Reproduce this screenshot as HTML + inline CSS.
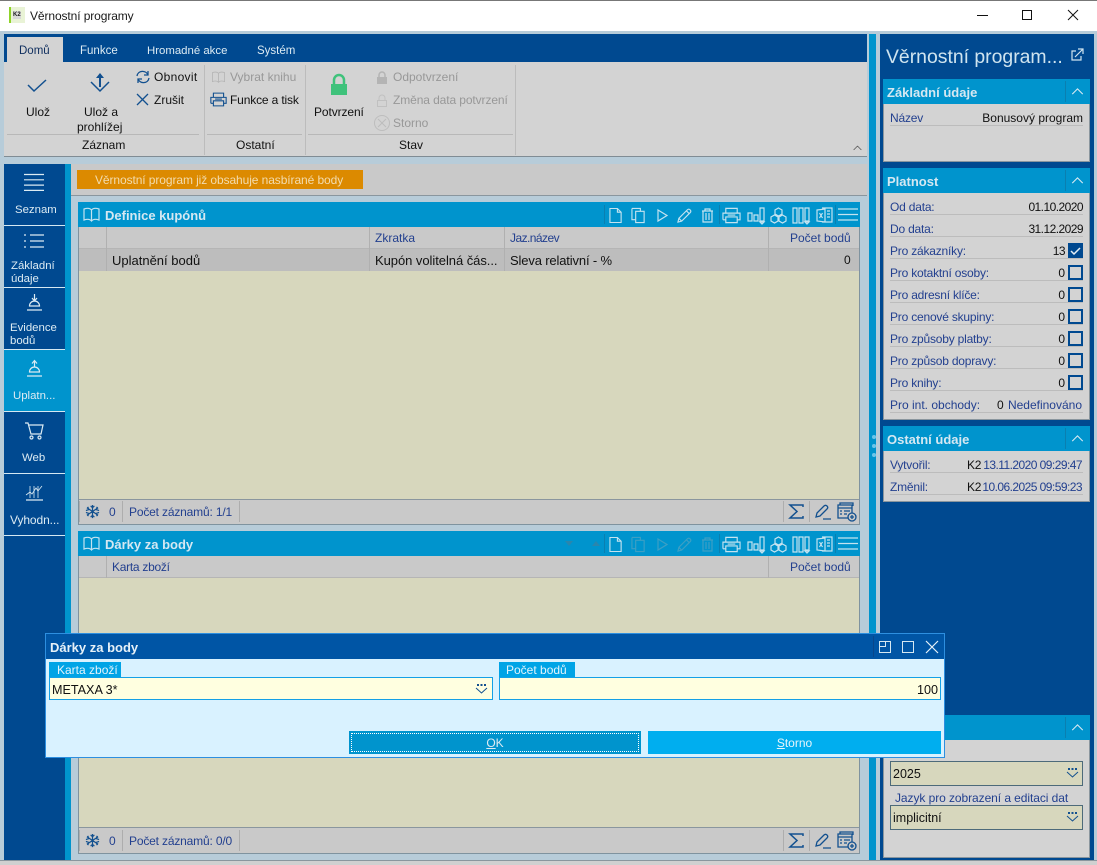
<!DOCTYPE html>
<html lang="cs"><head><meta charset="utf-8"><title>Věrnostní programy</title>
<style>
html,body{margin:0;padding:0;width:1097px;height:865px;overflow:hidden;background:#b7ccd9}
body{position:relative;font:12px/14px "Liberation Sans",sans-serif;color:#111}
.b{position:absolute;display:block}
.t{position:absolute;white-space:nowrap;line-height:14px}
.r{text-align:right}
.c{text-align:center}
.w{color:#dcebf3}
.nt{font-size:11.400px}
.n{color:#23408f}
.l{letter-spacing:-.2px}
.d{letter-spacing:-.55px}
.g{color:#989898}
.h{font-weight:bold;color:#d5e8f2;font-size:13px}
svg{position:absolute;overflow:visible;fill:none}
.tb{color:#c4e3f0;stroke:currentColor;stroke-width:1.2}
.dim{color:#3d9fc4}
.nv{stroke:#12508f;stroke-width:1.3}
.lw{stroke:#dcebf3;stroke-width:1.2}
.ln{position:absolute;left:890px;width:193px;height:1px;background:#bcbcbc}
.cb{position:absolute;left:1068px;width:11px;height:11px;border:2px solid #004990;background:#d3d3d3}
.sp{position:absolute;width:1px;background:#adadad;height:21px}
.sh{position:absolute;width:1px;background:#0a7fb0;height:19px}
</style></head><body>
<svg width="0" height="0" style="position:absolute"><defs>
<symbol id="doc" viewBox="0 0 15 17" overflow="visible"><path d="M1 1h8l4 4v11H1zM9 1v4h4"/></symbol>
<symbol id="copy" viewBox="0 0 16 17" overflow="visible"><path d="M1 1h9v3M1 1v12h4M5 4h9v12H5z"/></symbol>
<symbol id="play" viewBox="0 0 11 13" overflow="visible"><path d="M1 1l9 5.500L1 12z"/></symbol>
<symbol id="pen" viewBox="0 0 16 16" overflow="visible"><path d="M1 15l1-4L11 2c1-1 2-1 3 0s1 2 0 3l-9 9zM2 11l3 3M10 3l3 3"/></symbol>
<symbol id="trash" viewBox="0 0 13 15" overflow="visible"><path d="M1 3h11M4 3V1h5v2M2 3v11h9V3M5 5v7M8 5v7"/></symbol>
<symbol id="print" viewBox="0 0 20 17" overflow="visible"><path d="M4 6V1h12v5M1 13V6h18v7h-3M1 13h3M4 10h12v6H4zM6 8h8"/></symbol>
<symbol id="bars" viewBox="0 0 18 17" overflow="visible"><path d="M1 6h4v8H1zM7 8h4v6H7zM13 1h4v13h-4zM13 15h4l-2 2z"/></symbol>
<symbol id="cubes" viewBox="0 0 17 17" overflow="visible"><path d="M8.500 1l3.500 2v4l-3.500 2L5 7V3zM4.500 8L8 10v4l-3.500 2L1 14v-4zM12.500 8l3.500 2v4l-3.500 2L9 14v-4z"/></symbol>
<symbol id="cols" viewBox="0 0 18 17" overflow="visible"><path d="M1 1h4v15H1zM7 1h4v15H7zM13 1h4v13h-4zM13 15h4l-2 2z"/></symbol>
<symbol id="xls" viewBox="0 0 17 17" overflow="visible"><path d="M6 1h10v14H6M1 3l8-1v13l-8-1zM3.500 6l3 5M6.500 6l-3 5M11 4h3M11 7h3M11 10h3"/></symbol>
<symbol id="book" viewBox="0 0 17 16" overflow="visible"><path d="M1 2c3-1 6-1 7.500 1C10 1 13 1 16 2v11c-3-1-6-1-7.500 1C7 12 4 12 1 13zM8.500 3v11"/></symbol>
<symbol id="snow" viewBox="0 0 16 16" overflow="visible"><path d="M8 1v14M2 4l12 8M14 4L2 12M6 2l2 2 2-2M6 14l2-2 2 2M1 7l3-1-1-3M15 7l-3-1 1-3M1 9l3 1-1 3M15 9l-3 1 1 3"/></symbol>
<symbol id="tadd" viewBox="0 0 20 20" overflow="visible"><path d="M3 3V1h13v3M1 3h14v13H1zM1 6h14M3 9h2M7 9h6M3 12h2M7 12h3"/><circle cx="15" cy="15" r="4" fill="#c8c8c8"/><path d="M15 13v4M13 15h4"/></symbol>
<symbol id="sig" viewBox="0 0 15 15" overflow="visible"><path d="M14 3V1H1l7 6.500L1 14h13v-2" stroke-width="1.500"/></symbol>
<symbol id="penl" viewBox="0 0 16 16" overflow="visible"><path d="M1 13l1-4L9 2c1-1 2-1 3 0s1 2 0 3l-7 7zM8 15h8"/></symbol>
<symbol id="chev" viewBox="0 0 14 8" overflow="visible"><path d="M1 7l6-6 6 6"/></symbol>
<symbol id="drop" viewBox="0 0 13 10" overflow="visible"><path d="M1 4l5.500 5L12 4"/><path d="M2 0h2v2H2zM5.500 0h2v2h-2zM9 0h2v2H9z" fill="currentColor" stroke="none"/></symbol>
<symbol id="menu" viewBox="0 0 20 13" overflow="visible"><path d="M0 1h20M0 6.500h20M0 12h20"/></symbol>
</defs></svg>

<!-- title bar -->
<div class="b" style="left:0;top:0;width:1097px;height:31px;background:#fff;border-top:1px solid #777;box-sizing:border-box"></div>
<div class="b" style="left:9px;top:7px;width:16px;height:16px;background:#e9f3d6"></div>
<div class="b" style="left:9px;top:7px;width:2px;height:16px;background:#8fd32a"></div>
<div class="t" style="left:13px;top:11px;font:bold 6px/8px 'Liberation Sans',sans-serif;color:#222;background:#d8d8d8">K2</div>
<div class="t" style="left:30px;top:9px;color:#1a1a1a;letter-spacing:-.1px">Věrnostní programy</div>
<div class="b" style="left:977px;top:15px;width:11px;height:1px;background:#111"></div>
<div class="b" style="left:1022px;top:10px;width:8px;height:8px;border:1px solid #111"></div>
<svg style="left:1068px;top:10px" width="10" height="10" stroke="#111"><path d="M0 0l10 10M10 0L0 10"/></svg>

<!-- ribbon -->
<div class="b" style="left:4px;top:34px;width:863px;height:28px;background:#004990"></div>
<div class="b" style="left:4px;top:62px;width:863px;height:95px;background:#d3d3d3;border-bottom:1px solid #808c94;box-sizing:border-box"></div>
<div class="b" style="left:7px;top:37px;width:56px;height:25px;background:#d3d3d3"></div>
<div class="t" style="left:19px;top:44px;font-size:11.500px;color:#0f2e5e">Domů</div>
<div class="t w" style="left:80px;top:44px;font-size:11.500px">Funkce</div>
<div class="t w" style="left:147px;top:44px;font-size:11.400px">Hromadné akce</div>
<div class="t w" style="left:257px;top:44px;font-size:11.500px">Systém</div>

<svg class="nv" style="left:27px;top:79px" width="20" height="14"><path d="M1 6l6 6L19 1" stroke-width="1.500"/></svg>
<div class="t" style="left:26px;top:105px">Ulož</div>
<svg class="nv" style="left:90px;top:72px" width="20" height="21"><path d="M1 10l9 9 9-9" stroke-width="1.500"/><path d="M10 15V2" stroke-width="2"/><path d="M6 6l4-5 4 5z" fill="#12508f" stroke="none"/></svg>
<div class="t" style="left:84px;top:105px">Ulož a</div>
<div class="t" style="left:77px;top:120px">prohlížej</div>
<svg class="nv" style="left:136px;top:70px" width="14" height="14"><path d="M1 6c1-6 9-6 11-1M13 8c-1 6-9 6-11 1M12 1v4H8M2 13V9h4"/></svg>
<div class="t" style="left:154px;top:70px;letter-spacing:.3px">Obnovit</div>
<svg class="nv" style="left:137px;top:94px" width="11" height="11"><path d="M0 0l11 11M11 0L0 11"/></svg>
<div class="t" style="left:154px;top:93px">Zrušit</div>
<div class="b" style="left:7px;top:134px;width:192px;height:1px;background:#b8b8b8"></div>
<div class="t" style="left:82px;top:138px">Záznam</div>
<div class="b" style="left:204px;top:65px;width:1px;height:90px;background:#bcbcbc"></div>

<svg style="left:211px;top:71px;color:#b4b4b4;stroke:currentColor" width="15" height="13" viewBox="0 0 17 16"><use href="#book"/></svg>
<div class="t g" style="left:230px;top:70px">Vybrat knihu</div>
<svg class="nv" style="left:210px;top:92px" width="17" height="15" viewBox="0 0 20 17"><use href="#print"/></svg>
<div class="t" style="left:230px;top:93px;letter-spacing:-.15px">Funkce a tisk</div>
<div class="b" style="left:207px;top:134px;width:95px;height:1px;background:#b8b8b8"></div>
<div class="t" style="left:236px;top:138px">Ostatní</div>
<div class="b" style="left:305px;top:65px;width:1px;height:90px;background:#bcbcbc"></div>

<svg style="left:330px;top:74px" width="18" height="22"><path d="M4 10V6a5 5 0 0 1 10 0v4" stroke="#3fc27b" stroke-width="2.500"/><rect x="1" y="10" width="16" height="11" fill="#3fc27b"/></svg>
<div class="t" style="left:314px;top:105px;letter-spacing:-.1px">Potvrzení</div>
<svg style="left:376px;top:71px" width="12" height="13"><path d="M3 6V4a3 3 0 0 1 6 0v2" stroke="#b4b4b4" stroke-width="1.500"/><rect x="1" y="6" width="10" height="7" fill="#b4b4b4"/></svg>
<div class="t g" style="left:393px;top:70px">Odpotvrzení</div>
<svg style="left:376px;top:94px" width="12" height="13"><path d="M3 6V4a3 3 0 0 1 6 0v2M1.500 6.500h9v6h-9z" stroke="#c0c0c0"/></svg>
<div class="t g" style="left:393px;top:93px;letter-spacing:-.1px">Změna data potvrzení</div>
<svg style="left:374px;top:115px" width="16" height="16" stroke="#bdbdbd"><circle cx="8" cy="8" r="7.500"/><path d="M4 4l8 8M12 4l-8 8"/></svg>
<div class="t g" style="left:393px;top:116px">Storno</div>
<div class="b" style="left:308px;top:134px;width:205px;height:1px;background:#b8b8b8"></div>
<div class="t" style="left:399px;top:138px">Stav</div>
<div class="b" style="left:515px;top:65px;width:1px;height:90px;background:#bcbcbc"></div>
<svg style="left:853px;top:145px;stroke:#333" width="9" height="6" viewBox="0 0 14 8"><use href="#chev"/></svg>

<!-- left nav -->
<div class="b" style="left:4px;top:164px;width:61px;height:696px;background:#004990"></div>
<div class="b" style="left:65px;top:164px;width:6px;height:696px;background:#0094cd"></div>
<div class="b" style="left:4px;top:350px;width:61px;height:61px;background:#0094cd"></div>
<div class="b" style="left:4px;top:225px;width:61px;height:1px;background:#d5e8f2"></div>
<div class="b" style="left:4px;top:287px;width:61px;height:1px;background:#d5e8f2"></div>
<div class="b" style="left:4px;top:349px;width:61px;height:1px;background:#d5e8f2"></div>
<div class="b" style="left:4px;top:411px;width:61px;height:1px;background:#d5e8f2"></div>
<div class="b" style="left:4px;top:473px;width:61px;height:1px;background:#d5e8f2"></div>
<div class="b" style="left:4px;top:535px;width:61px;height:1px;background:#d5e8f2"></div>

<svg class="lw" style="left:24px;top:174px" width="20" height="17"><path d="M0 .5h20M0 5.800h20M0 11.100h20M0 16.400h20"/></svg>
<div class="t w nt" style="left:15px;top:203px">Seznam</div>
<svg class="lw" style="left:24px;top:234px" width="20" height="14"><path d="M6 1h14M6 7h14M6 13h14M0 1h2M0 7h2M0 13h2"/></svg>
<div class="t w nt" style="left:11px;top:259px">Základní</div>
<div class="t w nt" style="left:11px;top:272px">údaje</div>
<svg class="lw" style="left:27px;top:294px" width="15" height="17"><path d="M7.500 0v6M5 4l2.500 3L10 4M2.500 12a5 5 0 0 1 10 0zM0 16h15"/></svg>
<div class="t w nt" style="left:10px;top:321px">Evidence</div>
<div class="t w nt" style="left:10px;top:334px">bodů</div>
<svg class="lw" style="left:27px;top:360px" width="15" height="17"><path d="M7.500 7V1M5 3.500L7.500 .5 10 3.500M2.500 12a5 5 0 0 1 10 0zM0 16h15"/></svg>
<div class="t w nt" style="left:13px;top:389px">Uplatn...</div>
<svg class="lw" style="left:25px;top:422px" width="19" height="18"><path d="M0 1h3l3 11h10l2-9H4"/><circle cx="6.500" cy="15.500" r="1.500"/><circle cx="14.500" cy="15.500" r="1.500"/></svg>
<div class="t w nt" style="left:22px;top:451px">Web</div>
<svg class="lw" style="left:26px;top:484px" width="17" height="17"><path d="M0 11l4-3 2 2 4-6 2 3 4-5M4 2v12M8 2v12M12 2v12" stroke-width=".8"/><path d="M0 16h17"/></svg>
<div class="t w" style="left:10px;top:513px;letter-spacing:-.1px">Vyhodn...</div>

<!-- content area -->
<div class="b" style="left:71px;top:164px;width:796px;height:32px;background:#c9c9c9;border-bottom:1px solid #8a969e;box-sizing:border-box"></div>
<div class="b" style="left:77px;top:170px;width:286px;height:19px;background:#dc8a00"></div>
<div class="t" style="left:95px;top:173px;color:#f2dcae;letter-spacing:-.09px">Věrnostní program již obsahuje nasbírané body</div>

<!-- grid 1 -->
<div class="b" style="left:78px;top:202px;width:782px;height:323px;background:#d7d7bd;border:1px solid #7f939f;border-top:0;box-sizing:border-box"></div>
<div class="b" style="left:78px;top:202px;width:782px;height:25px;background:#0094cd"></div>
<svg class="tb" style="left:83px;top:207px" width="17" height="16"><use href="#book"/></svg>
<div class="t h" style="left:105px;top:209px">Definice kupónů</div>
<div class="b" style="left:79px;top:227px;width:780px;height:22px;background:#c9c9c9;border-bottom:1px solid #b5b5b5;box-sizing:border-box"></div>
<div class="b" style="left:79px;top:249px;width:780px;height:22px;background:#bdbdbd"></div>
<div class="b" style="left:106px;top:227px;width:1px;height:44px;background:#b0b0b0"></div>
<div class="b" style="left:369px;top:227px;width:1px;height:44px;background:#b0b0b0"></div>
<div class="b" style="left:504px;top:227px;width:1px;height:44px;background:#b0b0b0"></div>
<div class="b" style="left:768px;top:227px;width:1px;height:44px;background:#b0b0b0"></div>
<div class="t n" style="left:375px;top:231px">Zkratka</div>
<div class="t n" style="left:510px;top:231px;letter-spacing:-.55px">Jaz.název</div>
<div class="t n" style="left:790px;top:231px">Počet bodů</div>
<div class="t" style="left:112px;top:254px;font-size:13px">Uplatnění bodů</div>
<div class="t" style="left:375px;top:254px;font-size:13px;letter-spacing:-.05px">Kupón volitelná čás...</div>
<div class="t" style="left:510px;top:254px;font-size:13px;letter-spacing:-.15px">Sleva relativní - %</div>
<div class="t" style="left:844px;top:253px">0</div>

<div class="sh" style="left:604px;top:205px"></div>
<svg class="tb" style="left:609px;top:207px" width="14" height="17" viewBox="0 0 15 17"><use href="#doc"/></svg>
<svg class="tb" style="left:631px;top:207px" width="15" height="17" viewBox="0 0 16 17"><use href="#copy"/></svg>
<svg class="tb" style="left:657px;top:209px" width="11" height="13" viewBox="0 0 11 13"><use href="#play"/></svg>
<svg class="tb" style="left:677px;top:208px" width="15" height="15" viewBox="0 0 16 16"><use href="#pen"/></svg>
<svg class="tb" style="left:701px;top:208px" width="13" height="15" viewBox="0 0 13 15"><use href="#trash"/></svg>
<div class="sh" style="left:719px;top:205px"></div>
<svg class="tb" style="left:722px;top:207px" width="19" height="17" viewBox="0 0 20 17"><use href="#print"/></svg>
<svg class="tb" style="left:747px;top:207px" width="18" height="17" viewBox="0 0 18 17"><use href="#bars"/></svg>
<svg class="tb" style="left:770px;top:207px" width="17" height="17" viewBox="0 0 17 17"><use href="#cubes"/></svg>
<svg class="tb" style="left:792px;top:207px" width="18" height="17" viewBox="0 0 18 17"><use href="#cols"/></svg>
<svg class="tb" style="left:816px;top:207px" width="17" height="17" viewBox="0 0 17 17"><use href="#xls"/></svg>
<div class="sh" style="left:835px;top:205px"></div>
<svg class="tb" style="left:838px;top:208px" width="20" height="13" viewBox="0 0 20 13"><use href="#menu"/></svg>

<div class="b" style="left:79px;top:499px;width:780px;height:25px;background:#c9c9c9;border-top:1px solid #8a969e;box-sizing:border-box"></div>
<div class="sp" style="left:79px;top:501px"></div>
<svg class="nv" style="left:85px;top:504px" width="15" height="15" viewBox="0 0 16 16"><use href="#snow"/></svg>
<div class="t n" style="left:109px;top:505px">0</div>
<div class="sp" style="left:122px;top:501px"></div>
<div class="t n" style="left:129px;top:505px;letter-spacing:-.17px">Počet záznamů: 1/1</div>
<div class="sp" style="left:239px;top:501px"></div>
<div class="sp" style="left:783px;top:501px"></div>
<svg class="nv" style="left:789px;top:504px" width="15" height="15" viewBox="0 0 15 15"><use href="#sig"/></svg>
<div class="sp" style="left:809px;top:501px"></div>
<svg class="nv" style="left:815px;top:504px" width="16" height="16" viewBox="0 0 16 16"><use href="#penl"/></svg>
<svg class="nv" style="left:837px;top:502px" width="20" height="20" viewBox="0 0 20 20"><use href="#tadd"/></svg>

<!-- grid 2 -->
<div class="b" style="left:78px;top:531px;width:782px;height:323px;background:#d7d7bd;border:1px solid #7f939f;border-top:0;box-sizing:border-box"></div>
<div class="b" style="left:78px;top:531px;width:782px;height:25px;background:#0094cd"></div>
<svg class="tb" style="left:83px;top:536px" width="17" height="16"><use href="#book"/></svg>
<div class="t h" style="left:105px;top:538px">Dárky za body</div>
<div class="b" style="left:79px;top:556px;width:780px;height:22px;background:#c9c9c9;border-bottom:1px solid #b5b5b5;box-sizing:border-box"></div>
<div class="b" style="left:106px;top:556px;width:1px;height:22px;background:#b0b0b0"></div>
<div class="b" style="left:768px;top:556px;width:1px;height:22px;background:#b0b0b0"></div>
<div class="t n" style="left:112px;top:560px;letter-spacing:-.27px">Karta zboží</div>
<div class="t n" style="left:790px;top:560px">Počet bodů</div>

<svg style="left:565px;top:541px" width="36" height="6"><path d="M0 0h8L4 5zM27 5h8l-4-5z" fill="#2a86ad"/></svg>
<div class="sh" style="left:604px;top:534px"></div>
<svg class="tb" style="left:609px;top:536px" width="14" height="17" viewBox="0 0 15 17"><use href="#doc"/></svg>
<svg class="tb dim" style="left:631px;top:536px" width="15" height="17" viewBox="0 0 16 17"><use href="#copy"/></svg>
<svg class="tb dim" style="left:657px;top:538px" width="11" height="13" viewBox="0 0 11 13"><use href="#play"/></svg>
<svg class="tb dim" style="left:677px;top:537px" width="15" height="15" viewBox="0 0 16 16"><use href="#pen"/></svg>
<svg class="tb dim" style="left:701px;top:537px" width="13" height="15" viewBox="0 0 13 15"><use href="#trash"/></svg>
<div class="sh" style="left:719px;top:534px"></div>
<svg class="tb" style="left:722px;top:536px" width="19" height="17" viewBox="0 0 20 17"><use href="#print"/></svg>
<svg class="tb" style="left:747px;top:536px" width="18" height="17" viewBox="0 0 18 17"><use href="#bars"/></svg>
<svg class="tb" style="left:770px;top:536px" width="17" height="17" viewBox="0 0 17 17"><use href="#cubes"/></svg>
<svg class="tb" style="left:792px;top:536px" width="18" height="17" viewBox="0 0 18 17"><use href="#cols"/></svg>
<svg class="tb" style="left:816px;top:536px" width="17" height="17" viewBox="0 0 17 17"><use href="#xls"/></svg>
<div class="sh" style="left:835px;top:534px"></div>
<svg class="tb" style="left:838px;top:537px" width="20" height="13" viewBox="0 0 20 13"><use href="#menu"/></svg>

<div class="b" style="left:79px;top:827px;width:780px;height:26px;background:#c9c9c9;border-top:1px solid #8a969e;box-sizing:border-box"></div>
<div class="sp" style="left:79px;top:830px"></div>
<svg class="nv" style="left:85px;top:833px" width="15" height="15" viewBox="0 0 16 16"><use href="#snow"/></svg>
<div class="t n" style="left:109px;top:834px">0</div>
<div class="sp" style="left:122px;top:830px"></div>
<div class="t n" style="left:129px;top:834px;letter-spacing:-.17px">Počet záznamů: 0/0</div>
<div class="sp" style="left:239px;top:830px"></div>
<div class="sp" style="left:783px;top:830px"></div>
<svg class="nv" style="left:789px;top:833px" width="15" height="15" viewBox="0 0 15 15"><use href="#sig"/></svg>
<div class="sp" style="left:809px;top:830px"></div>
<svg class="nv" style="left:815px;top:833px" width="16" height="16" viewBox="0 0 16 16"><use href="#penl"/></svg>
<svg class="nv" style="left:837px;top:831px" width="20" height="20" viewBox="0 0 20 20"><use href="#tadd"/></svg>

<div class="b" style="left:0;top:860px;width:1097px;height:5px;background:#d0d0d0;border-top:1px solid #8a969e;box-sizing:border-box"></div>

<!-- right strip -->
<div class="b" style="left:869px;top:34px;width:7px;height:826px;background:#0094cd"></div>
<div class="b" style="left:872px;top:435px;width:4px;height:4px;border-radius:2px;background:#6cc6ea"></div>
<div class="b" style="left:872px;top:444px;width:4px;height:4px;border-radius:2px;background:#6cc6ea"></div>
<div class="b" style="left:872px;top:453px;width:4px;height:4px;border-radius:2px;background:#6cc6ea"></div>
<!-- right panel -->
<div class="b" style="left:880px;top:34px;width:214px;height:826px;background:#004990"></div>
<div class="t" style="left:886px;top:46px;font-size:19.400px;line-height:23px;color:#cfe4ef">Věrnostní program...</div>
<svg style="left:1071px;top:48px" width="13" height="13" stroke="#cfe4ef" stroke-width="1.200"><path d="M5 3H1v9h9V8M4 9l8-8M7 1h5v5"/></svg>

<!-- section: zakladni -->
<div class="b" style="left:883px;top:79px;width:207px;height:83px;background:#d3d3d3;border:1px solid #8a969e;border-top:0;box-sizing:border-box"></div>
<div class="b" style="left:883px;top:79px;width:207px;height:25px;background:#0094cd"></div>
<div class="t h" style="left:887px;top:86px">Základní údaje</div>
<div class="b" style="left:1065px;top:81px;width:1px;height:21px;background:#0a7fb0"></div>
<svg class="lw" style="left:1071px;top:88px" width="13" height="7" viewBox="0 0 14 8"><use href="#chev"/></svg>
<div class="t n l" style="left:890px;top:111px">Název</div>
<div class="t r" style="right:14px;top:111px">Bonusový program</div>
<div class="ln" style="top:125px"></div>

<!-- section: platnost -->
<div class="b" style="left:883px;top:168px;width:207px;height:252px;background:#d3d3d3;border:1px solid #8a969e;border-top:0;box-sizing:border-box"></div>
<div class="b" style="left:883px;top:168px;width:207px;height:25px;background:#0094cd"></div>
<div class="t h" style="left:887px;top:175px">Platnost</div>
<div class="b" style="left:1065px;top:170px;width:1px;height:21px;background:#0a7fb0"></div>
<svg class="lw" style="left:1071px;top:177px" width="13" height="7" viewBox="0 0 14 8"><use href="#chev"/></svg>

<div class="t n l" style="left:890px;top:200px">Od data:</div><div class="t r d" style="right:14px;top:200px">01.10.2020</div><div class="ln" style="top:214px"></div>
<div class="t n l" style="left:890px;top:222px">Do data:</div><div class="t r d" style="right:14px;top:222px">31.12.2029</div><div class="ln" style="top:236px"></div>
<div class="t n l" style="left:890px;top:244px">Pro zákazníky:</div><div class="t r d" style="right:32px;top:244px">13</div><div class="ln" style="top:258px"></div>
<div class="b" style="left:1068px;top:243px;width:15px;height:15px;background:#004990"></div>
<svg style="left:1071px;top:247px" width="9" height="8" stroke="#e4eef5" stroke-width="1.500"><path d="M0 4l3 3 6-6"/></svg>
<div class="t n l" style="left:890px;top:266px">Pro kotaktní osoby:</div><div class="t r" style="right:32px;top:266px">0</div><div class="ln" style="top:280px"></div><div class="cb" style="top:265px"></div>
<div class="t n l" style="left:890px;top:288px">Pro adresní klíče:</div><div class="t r" style="right:32px;top:288px">0</div><div class="ln" style="top:302px"></div><div class="cb" style="top:287px"></div>
<div class="t n l" style="left:890px;top:310px">Pro cenové skupiny:</div><div class="t r" style="right:32px;top:310px">0</div><div class="ln" style="top:324px"></div><div class="cb" style="top:309px"></div>
<div class="t n l" style="left:890px;top:332px">Pro způsoby platby:</div><div class="t r" style="right:32px;top:332px">0</div><div class="ln" style="top:346px"></div><div class="cb" style="top:331px"></div>
<div class="t n l" style="left:890px;top:354px">Pro způsob dopravy:</div><div class="t r" style="right:32px;top:354px">0</div><div class="ln" style="top:368px"></div><div class="cb" style="top:353px"></div>
<div class="t n l" style="left:890px;top:376px">Pro knihy:</div><div class="t r" style="right:32px;top:376px">0</div><div class="ln" style="top:390px"></div><div class="cb" style="top:375px"></div>
<div class="t n" style="left:890px;top:398px">Pro int. obchody:</div><div class="t" style="left:997px;top:398px">0</div><div class="t n" style="right:15px;top:398px">Nedefinováno</div><div class="ln" style="top:412px"></div>

<!-- section: ostatni -->
<div class="b" style="left:883px;top:426px;width:207px;height:76px;background:#d3d3d3;border:1px solid #8a969e;border-top:0;box-sizing:border-box"></div>
<div class="b" style="left:883px;top:426px;width:207px;height:25px;background:#0094cd"></div>
<div class="t h" style="left:887px;top:433px">Ostatní údaje</div>
<div class="b" style="left:1065px;top:428px;width:1px;height:21px;background:#0a7fb0"></div>
<svg class="lw" style="left:1071px;top:435px" width="13" height="7" viewBox="0 0 14 8"><use href="#chev"/></svg>
<div class="t n l" style="left:890px;top:458px">Vytvořil:</div>
<div class="t" style="left:967px;top:458px;letter-spacing:-.3px">K2</div><div class="t n d" style="right:15px;top:458px">13.11.2020 09:29:47</div><div class="ln" style="top:472px"></div>
<div class="t n l" style="left:890px;top:480px">Změnil:</div>
<div class="t" style="left:967px;top:480px;letter-spacing:-.3px">K2</div><div class="t n d" style="right:15px;top:480px">10.06.2025 09:59:23</div><div class="ln" style="top:494px"></div>

<!-- section: bottom -->
<div class="b" style="left:883px;top:715px;width:207px;height:143px;background:#d3d3d3;border:1px solid #8a969e;border-top:0;box-sizing:border-box"></div>
<div class="b" style="left:883px;top:715px;width:207px;height:25px;background:#0094cd"></div>
<div class="b" style="left:1065px;top:717px;width:1px;height:21px;background:#0a7fb0"></div>
<svg class="lw" style="left:1071px;top:724px" width="13" height="7" viewBox="0 0 14 8"><use href="#chev"/></svg>
<div class="b" style="left:890px;top:761px;width:191px;height:23px;background:#d7d7bd;border:1px solid #4d6a7a"></div>
<div class="t" style="left:893px;top:767px;font-size:12.500px">2025</div>
<svg style="left:1066px;top:768px;color:#12508f;stroke:currentColor" width="13" height="10" viewBox="0 0 13 10"><use href="#drop"/></svg>
<div class="t n" style="left:895px;top:791px;letter-spacing:-.07px">Jazyk pro zobrazení a editaci dat</div>
<div class="b" style="left:890px;top:805px;width:191px;height:23px;background:#d7d7bd;border:1px solid #4d6a7a"></div>
<div class="t" style="left:893px;top:811px;font-size:12.500px">implicitní</div>
<svg style="left:1066px;top:812px;color:#12508f;stroke:currentColor" width="13" height="10" viewBox="0 0 13 10"><use href="#drop"/></svg>

<!-- dialog -->
<div class="b" style="left:45px;top:633px;width:900px;height:125px;background:#d9f2ff;border:1px solid #2d8fe0;box-sizing:border-box"></div>
<div class="b" style="left:46px;top:634px;width:898px;height:25px;background:#0055a5"></div>
<div class="t" style="left:50px;top:641px;font-weight:bold;font-size:13px;color:#e6f1f8">Dárky za body</div>
<div class="b" style="left:873px;top:636px;width:1px;height:21px;background:#0a468a"></div>
<svg style="left:879px;top:641px" width="12" height="12" stroke="#d5e8f2"><path d="M.5.500h11v11H.5zM6.500.5v5H.5"/></svg>
<svg style="left:902px;top:641px" width="12" height="12" stroke="#d5e8f2"><path d="M.5.500h11v11H.5z"/></svg>
<svg style="left:926px;top:641px" width="12" height="12" stroke="#e6f1f8" stroke-width="1.200"><path d="M0 0l12 12M12 0L0 12"/></svg>

<div class="b" style="left:49px;top:662px;width:72px;height:15px;background:#00a4e6"></div>
<div class="t" style="left:57px;top:663px;color:#e2f4fc">Karta zboží</div>
<div class="b" style="left:49px;top:677px;width:444px;height:23px;background:#ffffe0;border:1px solid #14a0e6;box-sizing:border-box"></div>
<div class="t" style="left:52px;top:683px;font-size:12.600px">METAXA 3*</div>
<svg style="left:475px;top:684px;color:#12508f;stroke:currentColor" width="13" height="10" viewBox="0 0 13 10"><use href="#drop"/></svg>
<div class="b" style="left:499px;top:662px;width:76px;height:15px;background:#00a4e6"></div>
<div class="t" style="left:506px;top:663px;color:#e2f4fc">Počet bodů</div>
<div class="b" style="left:499px;top:677px;width:442px;height:23px;background:#ffffe0;border:1px solid #14a0e6;box-sizing:border-box"></div>
<div class="t r" style="right:159px;top:683px;font-size:12.600px">100</div>
<div class="b" style="left:349px;top:731px;width:292px;height:23px;background:#0094cd"></div>
<div class="b" style="left:351px;top:733px;width:286px;height:17px;border:1px dotted #fff"></div>
<div class="t c" style="left:349px;top:736px;width:292px;color:#dcebf3"><u>O</u>K</div>
<div class="b" style="left:648px;top:731px;width:293px;height:23px;background:#00aeef"></div>
<div class="t c" style="left:648px;top:736px;width:293px;color:#e6f5fb"><u>S</u>torno</div>
</body></html>
